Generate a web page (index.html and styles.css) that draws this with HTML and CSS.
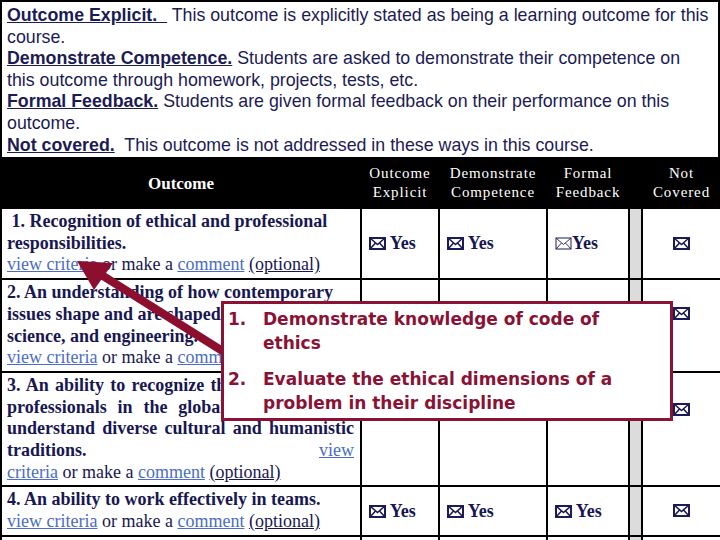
FILE: index.html
```html
<!DOCTYPE html>
<html>
<head>
<meta charset="utf-8">
<link rel="stylesheet" href="styles.css">
</head>
<body>
<div class="page">
  <div class="defs">
    <p><span class="term">Outcome Explicit.&nbsp;&nbsp;</span> This outcome is explicitly stated as being a learning outcome for this course.</p>
    <p><span class="term">Demonstrate Competence.</span> Students are asked to demonstrate their competence on this outcome through homework, projects, tests, etc.</p>
    <p><span class="term">Formal Feedback.</span> Students are given formal feedback on their performance on this outcome.</p>
    <p><span class="term">Not covered.</span>&nbsp; This outcome is not addressed in these ways in this course.</p>
  </div>
  <table class="grid">
    <colgroup>
      <col class="c-out"><col class="c-exp"><col class="c-dem"><col class="c-fb"><col class="c-gap"><col class="c-nc">
    </colgroup>
    <thead>
      <tr>
        <th class="h-out">Outcome</th>
        <th>Outcome<br>Explicit</th>
        <th>Demonstrate<br>Competence</th>
        <th>Formal<br>Feedback</th>
        <th class="gap"></th>
        <th>Not<br>Covered</th>
      </tr>
    </thead>
    <tbody>
      <tr class="r1">
        <td class="out"><b>&nbsp;1. Recognition of ethical and professional responsibilities.</b><br><a class="lnk">view criteria</a> or make a <a class="lnk">comment</a> <u>(optional)</u></td>
        <td class="yes"><svg class="box" viewBox="0 0 17 13"><rect x="1" y="1" width="15" height="11"/><path d="M1 1 L8.5 7.5 L16 1 M1 12 L6.5 6 M16 12 L10.5 6"/></svg> Yes</td>
        <td class="yes"><svg class="box" viewBox="0 0 17 13"><rect x="1" y="1" width="15" height="11"/><path d="M1 1 L8.5 7.5 L16 1 M1 12 L6.5 6 M16 12 L10.5 6"/></svg> Yes</td>
        <td class="yes"><svg class="box thin" viewBox="0 0 17 13"><rect x="1" y="1" width="15" height="11"/><path d="M1 1 L8.5 7.5 L16 1 M1 12 L6.5 6 M16 12 L10.5 6"/></svg>Yes</td>
        <td class="gap"></td>
        <td class="nc"><svg class="box" viewBox="0 0 17 13"><rect x="1" y="1" width="15" height="11"/><path d="M1 1 L8.5 7.5 L16 1 M1 12 L6.5 6 M16 12 L10.5 6"/></svg></td>
      </tr>
      <tr class="r2">
        <td class="out"><b>2. An understanding of how contemporary issues shape and are shaped by mathematics, science, and engineering.</b><br><a class="lnk">view criteria</a> or make a <a class="lnk">comment</a> <u>(optional)</u></td>
        <td></td><td></td><td></td>
        <td class="gap"></td>
        <td class="nc top1"><svg class="box" viewBox="0 0 17 13"><rect x="1" y="1" width="15" height="11"/><path d="M1 1 L8.5 7.5 L16 1 M1 12 L6.5 6 M16 12 L10.5 6"/></svg></td>
      </tr>
      <tr class="r3">
        <td class="out just"><b>3. An ability to recognize the roles of all the professionals in the global society and to understand diverse cultural and humanistic traditions.</b> <a class="lnk">view</a> <span class="keep"><a class="lnk">criteria</a> or make a <a class="lnk">comment</a> <u>(optional)</u></span></td>
        <td></td><td></td><td></td>
        <td class="gap"></td>
        <td class="nc top2"><svg class="box" viewBox="0 0 17 13"><rect x="1" y="1" width="15" height="11"/><path d="M1 1 L8.5 7.5 L16 1 M1 12 L6.5 6 M16 12 L10.5 6"/></svg></td>
      </tr>
      <tr class="r4">
        <td class="out"><b>4. An ability to work effectively in teams.</b><br><a class="lnk">view criteria</a> or make a <a class="lnk">comment</a> <u>(optional)</u></td>
        <td class="yes"><svg class="box" viewBox="0 0 17 13"><rect x="1" y="1" width="15" height="11"/><path d="M1 1 L8.5 7.5 L16 1 M1 12 L6.5 6 M16 12 L10.5 6"/></svg> Yes</td>
        <td class="yes"><svg class="box" viewBox="0 0 17 13"><rect x="1" y="1" width="15" height="11"/><path d="M1 1 L8.5 7.5 L16 1 M1 12 L6.5 6 M16 12 L10.5 6"/></svg> Yes</td>
        <td class="yes"><svg class="box" viewBox="0 0 17 13"><rect x="1" y="1" width="15" height="11"/><path d="M1 1 L8.5 7.5 L16 1 M1 12 L6.5 6 M16 12 L10.5 6"/></svg> Yes</td>
        <td class="gap"></td>
        <td class="nc"><svg class="box" viewBox="0 0 17 13"><rect x="1" y="1" width="15" height="11"/><path d="M1 1 L8.5 7.5 L16 1 M1 12 L6.5 6 M16 12 L10.5 6"/></svg></td>
      </tr>
      <tr class="r5">
        <td class="out">&nbsp;</td><td></td><td></td><td></td><td class="gap"></td><td></td>
      </tr>
    </tbody>
  </table>

  <svg class="arrow" viewBox="0 0 720 540" width="720" height="540">
    <line x1="224" y1="352" x2="100" y2="274" />
    <polygon points="77,261 113,263 94,290" />
  </svg>

  <div class="popup">
    <div class="item"><span class="num">1.</span><span class="txt">Demonstrate knowledge of code of ethics</span></div>
    <div class="item"><span class="num">2.</span><span class="txt">Evaluate the ethical dimensions of a problem in their discipline</span></div>
  </div>
</div>
</body>
</html>
```

FILE: styles.css
```css
html, body {
  margin: 0;
  padding: 0;
  background: #ffffff;
}

.page {
  position: relative;
  width: 720px;
  height: 540px;
  overflow: hidden;
}

.defs {
  box-sizing: border-box;
  width: 720px;
  height: 157px;
  border: 2px solid #000;
  border-bottom: 0;
  padding: 3px 8px 0 5px;
  font-family: "Liberation Sans", Arial, sans-serif;
  font-size: 17.8px;
  line-height: 21.6px;
  color: #1b1b56;
}

.defs p {
  margin: 0;
}

.term {
  font-weight: bold;
  text-decoration: underline;
}

.grid {
  width: 720px;
  table-layout: fixed;
  border-collapse: collapse;
  font-family: "Liberation Serif", "Times New Roman", serif;
  color: #171753;
}

.c-out { width: 360px; }
.c-exp { width: 78px; }
.c-dem { width: 108px; }
.c-fb { width: 82px; }
.c-gap { width: 13px; }
.c-nc { width: 79px; }

.grid th {
  background: #000;
  color: #fff;
  font-weight: normal;
  font-size: 15px;
  line-height: 19px;
  letter-spacing: 0.9px;
  height: 48px;
  padding: 0;
  border: 2px solid #000;
  text-align: center;
}

.grid th.h-out {
  font-weight: bold;
  font-size: 17px;
  letter-spacing: 0;
}

.grid td {
  border: 2px solid #000;
  padding: 0;
  vertical-align: middle;
}

.grid td.gap {
  background: #dcdcdc;
}

.grid td.out {
  font-size: 18px;
  line-height: 21.7px;
  padding: 2px 6px 2px 5px;
  vertical-align: top;
}

.grid td.just {
  text-align: justify;
}

.keep {
  white-space: nowrap;
}

.lnk {
  color: #4a6cc8;
  text-decoration: underline;
}

.r4 .out {
  padding-bottom: 3px;
}

.r5 td {
  height: 20px;
}

.grid td.yes {
  font-size: 18px;
  font-weight: bold;
  padding-left: 7px;
  white-space: nowrap;
}

.grid td.nc {
  text-align: center;
}

.grid td.top1 {
  vertical-align: top;
  padding-top: 25px;
}

.grid td.top2 {
  vertical-align: top;
  padding-top: 28px;
}

.box {
  width: 17px;
  height: 13px;
  vertical-align: -1px;
  fill: none;
  stroke: #1b1b56;
}

.box rect {
  stroke-width: 2;
}

.box path {
  stroke-width: 1.6;
}

.box.thin rect {
  stroke-width: 1;
}

.box.thin path {
  stroke-width: 0.9;
}

.arrow {
  position: absolute;
  left: 0;
  top: 0;
  pointer-events: none;
}

.arrow line {
  stroke: #8c0f30;
  stroke-width: 8;
}

.arrow polygon {
  fill: #8c0f30;
}

.popup {
  position: absolute;
  left: 221px;
  top: 301px;
  box-sizing: border-box;
  width: 452px;
  height: 120px;
  background: #fff;
  border: 3px solid #8a1234;
  padding: 3px 30px 0 4px;
  font-family: "DejaVu Sans", sans-serif;
  font-weight: bold;
  font-size: 17px;
  line-height: 24px;
  color: #8a1234;
}

.item {
  display: flex;
  margin-bottom: 12px;
}

.num {
  flex: 0 0 35px;
}

.txt {
  flex: 1 1 auto;
}
```
